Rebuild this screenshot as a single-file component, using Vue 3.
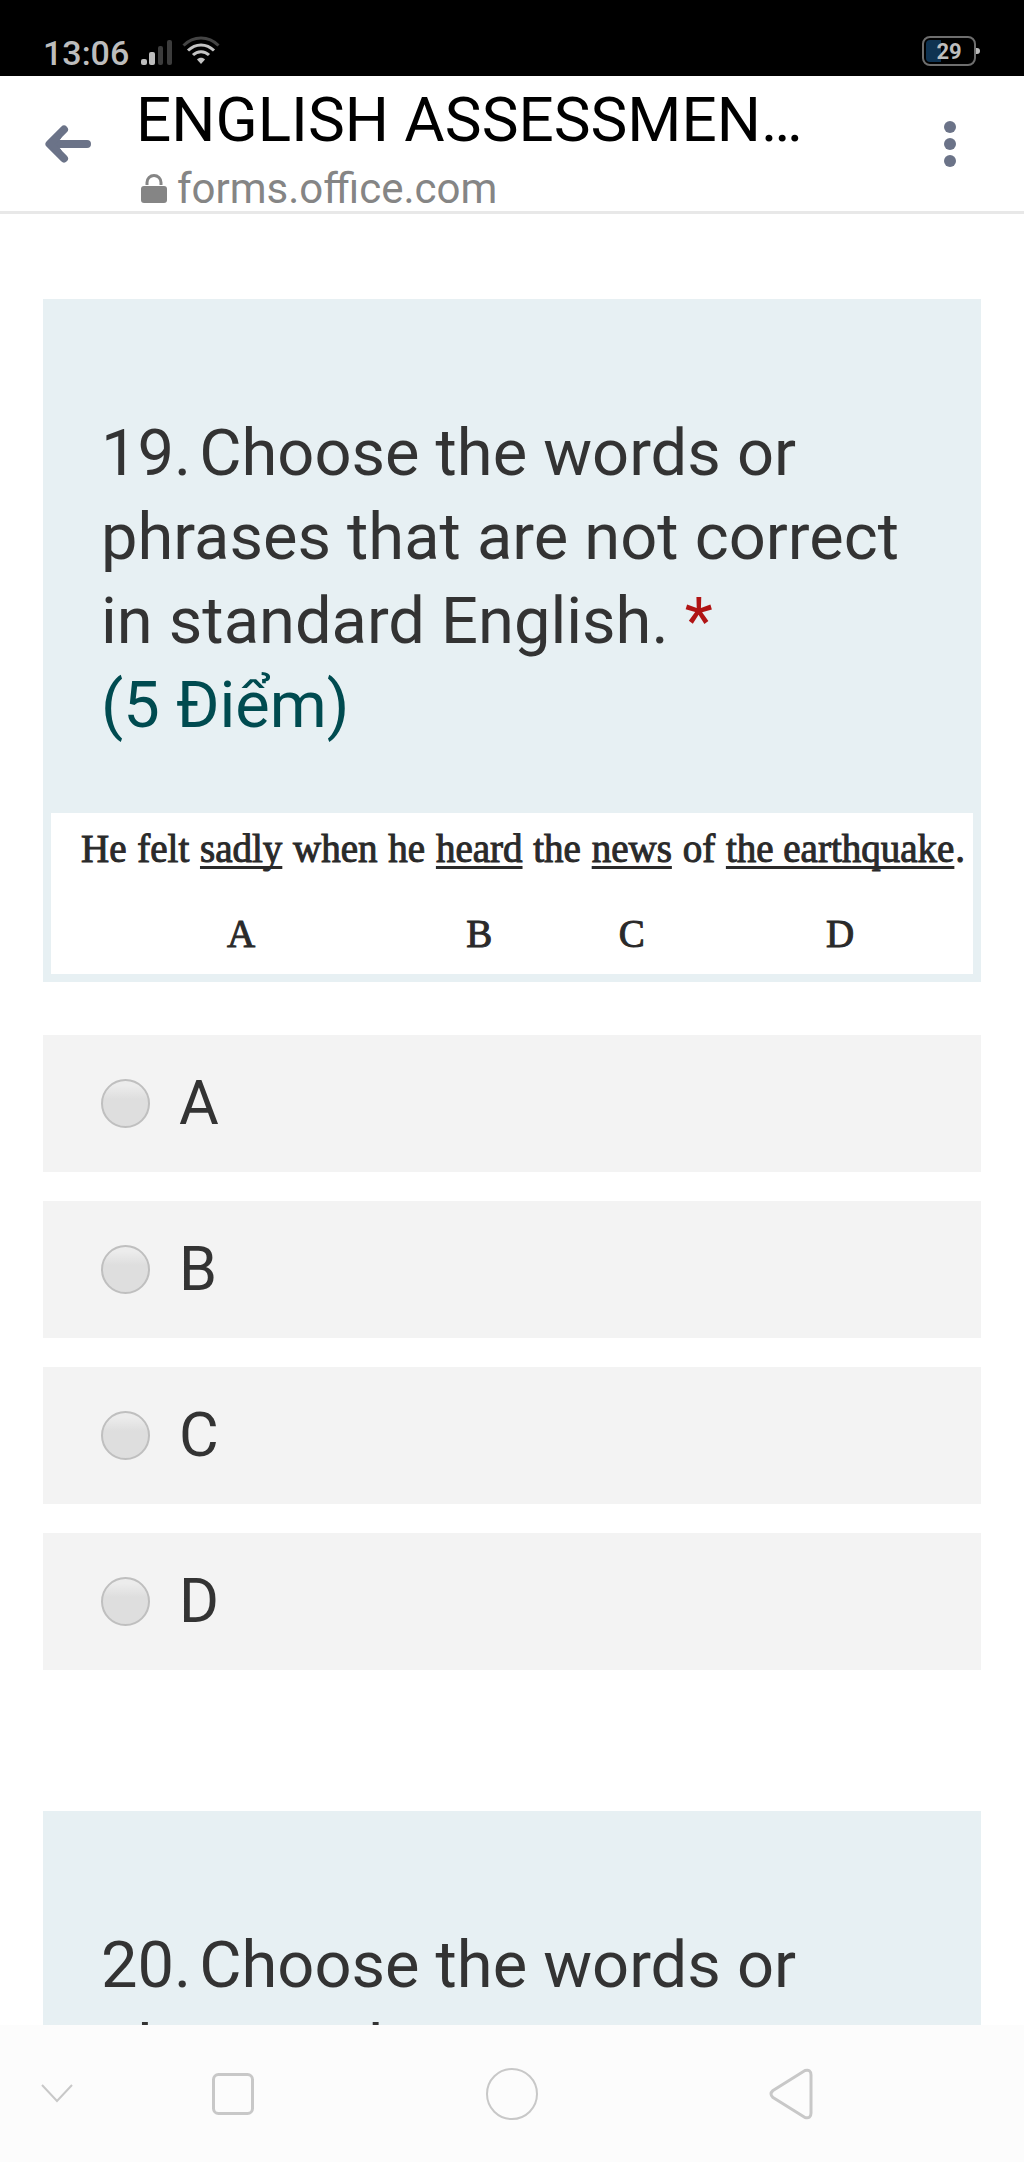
<script setup>
import { ref } from 'vue'

const options = ['A', 'B', 'C', 'D']
const answer = ref('')

const sentence = [
  { text: 'He' },
  { text: 'felt' },
  { text: 'sadly', mark: 'A' },
  { text: 'when' },
  { text: 'he' },
  { text: 'heard', mark: 'B' },
  { text: 'the' },
  { text: 'news', mark: 'C' },
  { text: 'of' },
  { text: 'the earthquake', mark: 'D' },
]
</script>

<template>
  <div class="screen">
    <div class="status">
      <div class="status-left">
        <span class="time">13:06</span>
        <svg class="signal" width="34" height="28" viewBox="0 0 34 28" aria-hidden="true">
          <rect x="1" y="20" width="6" height="6" rx="2" fill="#bdbdbd" />
          <rect x="9" y="13" width="6" height="13" rx="2" fill="#bdbdbd" />
          <rect x="18" y="7" width="5" height="19" rx="2" fill="#3c3c3c" />
          <rect x="27" y="1" width="5" height="25" rx="2" fill="#3c3c3c" />
        </svg>
        <svg class="wifi" width="38" height="30" viewBox="0 0 38 30" fill="none" stroke-width="3" aria-hidden="true">
          <path d="M1.5 9.5C11.5-.5 26.5-.5 36.5 9.5" stroke="#444" />
          <path d="M6 14.500C13.500 7 24.500 7 32 14.500" stroke="#c4c4c4" />
          <path d="M11 19C15.500 14.500 22.500 14.500 27 19" stroke="#c4c4c4" />
          <path d="M15 23.500C17 21 21 21 23 23.500L19 28Z" fill="#c4c4c4" />
        </svg>
      </div>
      <div class="battery">
        <div class="battery-body">
          <span class="battery-level"></span>
          <span class="battery-text">29</span>
        </div>
        <span class="battery-nub"></span>
      </div>
    </div>

    <header class="bar">
      <button class="icon-button back" type="button" aria-label="Back">
        <svg width="46" height="40" viewBox="0 0 46 40" fill="none" stroke="#6b7388" stroke-width="8" stroke-linecap="round" stroke-linejoin="round">
          <path d="M19 5.500 4.500 20 19 34.500M6 20H42" />
          <path d="M14 13 6 20l8 7" stroke-width="5" />
        </svg>
      </button>
      <div class="heading">
        <h1 class="title">ENGLISH ASSESSMEN…</h1>
        <div class="address">
          <svg width="26" height="30" viewBox="0 0 26 30" aria-hidden="true">
            <path d="M6 11V8.500a7 7 0 0 1 14 0V11" fill="none" stroke="#858585" stroke-width="3" />
            <rect x="0" y="12" width="26" height="17" rx="3" fill="#858585" />
          </svg>
          <span>forms.office.com</span>
        </div>
      </div>
      <button class="icon-button more" type="button" aria-label="More options">
        <svg width="14" height="48" viewBox="0 0 14 48" fill="#6b7388">
          <circle cx="7" cy="7" r="6" />
          <circle cx="7" cy="24" r="6" />
          <circle cx="7" cy="41" r="6" />
        </svg>
      </button>
    </header>

    <main class="content">
      <section class="card">
        <h2 id="q19" class="question">
          <span class="number">19.</span>Choose the words or phrases that are not correct in standard English. <span class="required">*</span>
          <span class="points">(5 Điểm)</span>
        </h2>
        <div class="figure">
          <div v-for="(part, i) in sentence" :key="i" class="part">
            <span class="word" :class="{ underlined: part.mark }">{{ part.text }}</span>
            <span v-if="part.mark">{{ part.mark }}</span>
          </div>
          <span class="stop">.</span>
        </div>
      </section>

      <div class="options" role="radiogroup" aria-labelledby="q19">
        <label v-for="option in options" :key="option" class="option">
          <input v-model="answer" class="radio" type="radio" name="q19" :value="option" />
          <span>{{ option }}</span>
        </label>
      </div>

      <section class="card">
        <h2 class="question">
          <span class="number">20.</span>Choose the words or phrases that are not correct in standard English. <span class="required">*</span>
          <span class="points">(5 Điểm)</span>
        </h2>
      </section>
    </main>

    <nav class="nav">
      <button class="icon-button hide" type="button" aria-label="Hide navigation">
        <svg width="32" height="20" viewBox="0 0 32 20" fill="none" stroke="#c8c8c8" stroke-width="2">
          <path d="M1 1 16 17 31 1" />
        </svg>
      </button>
      <button class="icon-button" type="button" aria-label="Recent apps">
        <svg width="42" height="42" viewBox="0 0 42 42" fill="none" stroke="#c8c8c8" stroke-width="3">
          <rect x="1.500" y="1.500" width="39" height="39" rx="5" />
        </svg>
      </button>
      <button class="icon-button" type="button" aria-label="Home">
        <svg width="52" height="52" viewBox="0 0 52 52" fill="none" stroke="#c8c8c8" stroke-width="2">
          <circle cx="26" cy="26" r="25" />
        </svg>
      </button>
      <button class="icon-button" type="button" aria-label="Back">
        <svg width="44" height="52" viewBox="0 0 44 52" fill="none" stroke="#c8c8c8" stroke-width="3" stroke-linejoin="round">
          <path d="M36 2.500 4 22.500Q0 26 4 29.500L36 49.500Q42 51 42 45V7Q42 1 36 2.500Z" />
        </svg>
      </button>
    </nav>
  </div>
</template>

<style>
body {
  margin: 0;
  background: #fff;
}
</style>

<style scoped>
.screen {
  display: flex;
  flex-direction: column;
  height: 100vh;
  font-family: Roboto, "Liberation Sans", sans-serif;
  color: #333;
}

.status {
  flex: none;
  box-sizing: border-box;
  height: 76px;
  padding: 30px 44px 0 43px;
  display: flex;
  align-items: center;
  justify-content: space-between;
  background: #000;
  color: #bdbdbd;
}

.status-left {
  display: flex;
  align-items: center;
}

.time {
  font-size: 34px;
  line-height: 46px;
  font-weight: 500;
}

.signal {
  margin-left: 11px;
}

.wifi {
  margin: 0 0 4px 8px;
}

.battery {
  display: flex;
  align-items: center;
  margin-bottom: 4px;
}

.battery-body {
  position: relative;
  box-sizing: border-box;
  width: 54px;
  height: 30px;
  border: 2px solid #6e6e6e;
  border-radius: 8px;
  text-align: center;
}

.battery-level {
  position: absolute;
  left: 2px;
  top: 2px;
  bottom: 2px;
  width: 15px;
  border-radius: 4px 0 0 4px;
  background: #0f3352;
}

.battery-text {
  position: relative;
  display: block;
  font-size: 22px;
  line-height: 28px;
  font-weight: 700;
}

.battery-nub {
  width: 4px;
  height: 6px;
  border-radius: 0 3px 3px 0;
  background: #bdbdbd;
}

.bar {
  flex: none;
  display: flex;
  align-items: center;
  padding: 0 44px;
  border-bottom: 3px solid #e8e8e8;
  background: #fff;
}

.icon-button {
  display: flex;
  align-items: center;
  justify-content: center;
  padding: 0;
  border: 0;
  background: none;
}

.back {
  width: 48px;
  margin-right: 44px;
}

.more {
  width: 60px;
}

.heading {
  flex: 1;
  min-width: 0;
  padding-top: 8px;
}

.title {
  margin: 0 0 11px;
  overflow: hidden;
  white-space: nowrap;
  text-overflow: ellipsis;
  font-size: 62px;
  line-height: 72px;
  font-weight: 400;
  color: #000;
}

.address {
  display: flex;
  align-items: center;
  gap: 10px;
  padding-left: 5px;
  font-size: 42px;
  line-height: 44px;
  color: #858585;
}

.content {
  flex: 1;
  min-height: 0;
  padding: 85px 43px 0;
  overflow-y: auto;
  scrollbar-width: none;
}

.card {
  padding: 112px 8px 8px;
  background: #e7f0f3;
}

.question {
  margin: 0 50px 66px;
  font-size: 65px;
  line-height: 84px;
  font-weight: 400;
}

.number {
  margin-right: 8px;
}

.required {
  color: #b01414;
}

.points {
  display: block;
  color: #004b50;
}

.figure {
  display: flex;
  justify-content: space-between;
  height: 161px;
  box-sizing: border-box;
  padding: 12px 8px 0 30px;
  background: #fff;
  color: #2a2a2a;
  font-family: "Liberation Serif", serif;
  font-size: 39px;
  line-height: 48px;
  -webkit-text-stroke: 1px #2a2a2a;
}

.part {
  display: flex;
  flex-direction: column;
  align-items: center;
  gap: 37px;
}

.word {
  white-space: nowrap;
}

.underlined {
  text-decoration: underline;
  text-decoration-thickness: 3px;
  text-underline-offset: 4px;
  text-decoration-skip-ink: none;
}

.stop {
  margin-left: -10px;
}

.options {
  display: flex;
  flex-direction: column;
  gap: 29px;
  margin: 53px 0 141px;
}

.option {
  display: flex;
  align-items: center;
  gap: 29px;
  padding: 32px 58px;
  background: #f3f3f3;
  font-size: 61px;
  line-height: 73px;
}

.radio {
  appearance: none;
  width: 49px;
  height: 49px;
  margin: 0;
  border: 2px solid #bfbfbf;
  border-radius: 50%;
  background: linear-gradient(#ececec 10%, #dedede 40%, #dedede);
}

.radio:checked {
  background: radial-gradient(#333 35%, #dedede 40%);
}

.nav {
  flex: none;
  display: grid;
  grid-template-columns: 1fr 3fr 3fr 3fr 1fr;
  align-items: center;
  justify-items: center;
  height: 137px;
  background: #fcfcfc;
}

.hide {
  padding-left: 20px;
}
</style>
